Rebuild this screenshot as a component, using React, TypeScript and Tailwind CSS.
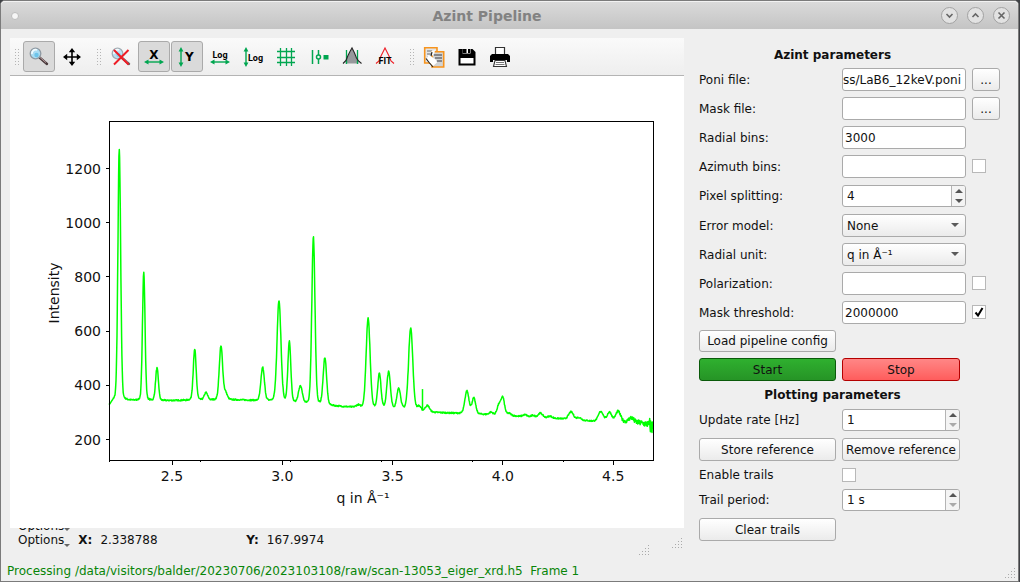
import React, { useMemo, useState } from 'react';

interface Peak {
    q: number;
    height: number;
    width: number;
}

const PEAKS: Peak[] = [
    { q: 2.261, height: 927, width: 0.0074 },
    { q: 2.372, height: 475, width: 0.0068 },
    { q: 2.432, height: 120, width: 0.0075 },
    { q: 2.603, height: 187, width: 0.0078 },
    { q: 2.654, height: 27, width: 0.009 },
    { q: 2.722, height: 198, width: 0.009 },
    { q: 2.743, height: 25, width: 0.009 },
    { q: 2.911, height: 123, width: 0.0092 },
    { q: 2.985, height: 372, width: 0.0105 },
    { q: 3.032, height: 222, width: 0.0078 },
    { q: 3.082, height: 62, width: 0.01 },
    { q: 3.141, height: 618, width: 0.0085 },
    { q: 3.193, height: 174, width: 0.009 },
    { q: 3.343, height: 8, width: 0.01 },
    { q: 3.389, height: 332, width: 0.0105 },
    { q: 3.44, height: 128, width: 0.0085 },
    { q: 3.482, height: 134, width: 0.0095 },
    { q: 3.528, height: 76, width: 0.0095 },
    { q: 3.582, height: 302, width: 0.0112 },
    { q: 3.62, height: 14, width: 0.009 },
    { q: 3.658, height: 22, width: 0.011 },
    { q: 3.837, height: 84, width: 0.0108 },
    { q: 3.868, height: 58, width: 0.0098 },
    { q: 3.946, height: 9, width: 0.01 },
    { q: 3.981, height: 34, width: 0.0092 },
    { q: 3.999, height: 66, width: 0.0098 },
    { q: 4.029, height: 8, width: 0.01 },
    { q: 4.1, height: 8, width: 0.012 },
    { q: 4.136, height: 7, width: 0.01 },
    { q: 4.17, height: 17, width: 0.012 },
    { q: 4.213, height: 7, width: 0.012 },
    { q: 4.309, height: 28, width: 0.013 },
    { q: 4.345, height: 9, width: 0.012 },
    { q: 4.444, height: 36, width: 0.013 },
    { q: 4.483, height: 34, width: 0.012 },
    { q: 4.522, height: 38, width: 0.013 },
    { q: 4.581, height: 16, width: 0.012 },
];

const BASELINE: [number, number][] = [
    [2.215, 326], [2.235, 343], [2.45, 343], [2.6, 345], [2.8, 346], [2.95, 341],
    [3.1, 332], [3.24, 323], [3.33, 318], [3.5, 314], [3.62, 307], [3.68, 300],
    [3.81, 296], [3.9, 293], [4.05, 287], [4.1, 283], [4.26, 277], [4.4, 268],
    [4.52, 266], [4.6, 264], [4.66, 256], [4.68, 244],
];

const xOf = (q: number) => 162 + (q - 2.5) * 220.6;
const yOf = (intensity: number) => 363.5 - (intensity - 200) * 0.271;

const baselineAt = (q: number): number => {
    for (let i = 1; i < BASELINE.length; i++) {
        const [q1, v1] = BASELINE[i];
        if (q <= q1) {
            const [q0, v0] = BASELINE[i - 1];
            return v0 + ((v1 - v0) * (q - q0)) / (q1 - q0);
        }
    }
    return BASELINE[BASELINE.length - 1][1];
};

// Pseudo-Voigt profile, mostly gaussian
const profile = (d: number, w: number): number => {
    const r = (d / w) * (d / w);
    return 0.86 * Math.exp(-Math.LN2 * r) + 0.14 / (1 + r);
};

const buildCurve = (): string => {
    let seed = 7;
    const noise = () => {
        seed = (seed * 16807) % 2147483647;
        return seed / 2147483647 - 0.5;
    };
    const points: string[] = [];
    for (let q = 2.216; q <= 4.68; q += 0.0015) {
        let amp = 5;
        if (q > 4.5) amp += (q - 4.5) * 130;
        if (q > 4.665) amp += 30;
        const sum = PEAKS.reduce((acc, p) => acc + p.height * profile(q - p.q, p.width), 0);
        const value = baselineAt(q) + sum + noise() * amp;
        points.push(`${xOf(q).toFixed(1)},${yOf(value).toFixed(1)}`);
    }
    return points.join(' ');
};

const X_TICKS = [2.5, 3, 3.5, 4, 4.5];
const Y_TICKS = [200, 400, 600, 800, 1000, 1200];
const MINOR_TICKS = [99, 190, 280, 371, 462, 553];

const Chart: React.FC = () => {
    const curve = useMemo(buildCurve, []);

    return (
        <svg viewBox="0 0 674 452" className="block h-auto w-full bg-white text-[14px]" role="img" aria-label="Intensity plot">
            <polyline points={curve} fill="none" stroke="#00ff00" strokeWidth="1.5" strokeLinejoin="round" />
            <path d={`M412.5 ${yOf(386)}V${yOf(306)}`} stroke="#00ff00" strokeWidth="1.5" />
            <rect x="99.5" y="45.5" width="544" height="339" fill="none" stroke="#000" />
            {MINOR_TICKS.map((x) => (
                <path key={x} d={`M${x}.5 385v1`} stroke="#000" />
            ))}
            {X_TICKS.map((q) => (
                <g key={q}>
                    <path d={`M${Math.floor(xOf(q)) + 0.5} 385v4`} stroke="#000" />
                    <text x={xOf(q)} y="405" textAnchor="middle" fill="#111">{q.toFixed(1)}</text>
                </g>
            ))}
            {Y_TICKS.map((v) => (
                <g key={v}>
                    <path d={`M96 ${Math.floor(yOf(v)) + 0.5}h3`} stroke="#000" />
                    <text x="91" y={yOf(v) + 5} textAnchor="end" fill="#111">{v}</text>
                </g>
            ))}
            <text x="353" y="427" textAnchor="middle" fill="#111">q in Å⁻¹</text>
            <text transform="translate(49 217) rotate(-90)" textAnchor="middle" fill="#111">Intensity</text>
        </svg>
    );
};

const GREEN = '#00a650';

const Icon: React.FC<{ children: React.ReactNode }> = ({ children }) => (
    <svg width="22" height="22" viewBox="0 0 22 22" fill="none" className="shrink-0 overflow-visible" aria-hidden="true">{children}</svg>
);

const HArrow: React.FC<{ y: number }> = ({ y }) => (
    <g transform={`translate(0 ${y})`}>
        <path d="M4 0h14" stroke={GREEN} strokeWidth="1.4" />
        <path d="M1 0l4.5-2.4v4.8zM21 0l-4.5-2.4v4.8z" fill={GREEN} />
    </g>
);

const VArrow: React.FC<{ x: number }> = ({ x }) => (
    <g transform={`translate(${x} 0)`}>
        <path d="M0 4v14" stroke={GREEN} strokeWidth="1.4" />
        <path d="M0 1l-2.4 4.5h4.8zM0 21l-2.4-4.5h4.8z" fill={GREEN} />
    </g>
);

const Lens: React.FC = () => (
    <>
        <path d="M11.5 11.5l7.5 6.5" stroke="#4a3a3c" strokeWidth="2.4" strokeLinecap="round" />
        <path d="M11.5 11l6.5 5.6" stroke="#b79a9c" strokeWidth="1" />
        <circle cx="7.5" cy="7.5" r="5.3" fill="#a9dcf3" stroke="#8f9aa3" strokeWidth="1.3" />
        <path d="M4 8a3.6 3.6 0 0 1 5-4" stroke="#f4fcff" strokeWidth="1.8" />
        <circle cx="8.5" cy="9" r="2.2" fill="#6cc4ea" />
    </>
);

const ZoomIcon = () => <Icon><Lens /></Icon>;

const PanIcon = () => (
    <Icon>
        <path d="M11 4v14M4 11h14" stroke="#000" strokeWidth="1.6" />
        <path d="M11 2l3.2 4.2H7.8zM11 20l3.2-4.2H7.8zM2 11l4.2-3.2v6.4zM20 11l-4.2-3.2v6.4z" fill="#000" />
    </Icon>
);

const ResetZoomIcon = () => (
    <Icon>
        <g opacity="0.8"><Lens /></g>
        <path d="M4 4l14.5 14.5M18.5 4L4 18.5" stroke="#ee1c25" strokeWidth="2" />
    </Icon>
);

const XAutoIcon = () => (
    <Icon>
        <text x="11" y="13" textAnchor="middle" fill="#000" className="text-[12px] font-bold">X</text>
        <HArrow y={16} />
    </Icon>
);

const YAutoIcon = () => (
    <Icon>
        <VArrow x={5} />
        <text x="9" y="15" fill="#000" className="text-[12px] font-bold">Y</text>
    </Icon>
);

const LOG_TEXT = 'font-[Roboto,sans-serif] text-[9px] font-bold';

const XLogIcon = () => (
    <Icon>
        <text x="11" y="12" textAnchor="middle" fill="#000" className={LOG_TEXT}>Log</text>
        <HArrow y={16} />
    </Icon>
);

const YLogIcon = () => (
    <Icon>
        <VArrow x={4} />
        <text x="6" y="15" fill="#000" className={LOG_TEXT}>Log</text>
    </Icon>
);

const GridIcon = () => (
    <Icon>
        <path d="M5.5 2v18M11.5 2v18M16.5 2v18M2 5.5h18M2 11.5h18M2 16.5h18" stroke={GREEN} strokeWidth="1.3" />
    </Icon>
);

const CurveStyleIcon = () => (
    <Icon>
        <path d="M4.5 4v14M10.5 4v5M10.5 13v5" stroke={GREEN} strokeWidth="1.5" />
        <circle cx="10.5" cy="11" r="2" stroke={GREEN} strokeWidth="1.5" />
        <path d="M15.5 9h5v4.5h-5z" fill={GREEN} />
    </Icon>
);

const RoiIcon = () => (
    <Icon>
        <path d="M4.5 17.5V15l2.500-5 2-4 2-3.500 2.500 5 2 5 2 3v2z" fill="#97999c" />
        <path d="M5.5 4v14M16.5 4v14" stroke={GREEN} strokeWidth="1.3" />
        <path d="M2 17.5l3-3 2-5 2-4 2-3.500 2.500 5 2 5 2 3 3 2.500" stroke="#222" strokeWidth="1.1" />
    </Icon>
);

const FitIcon = () => (
    <Icon>
        <path d="M2 17.5l3-2.500 2-5 2.500-5 1.500-3 1.500 3 2.500 5 2 5 3 2.500" stroke="#ee1c25" strokeWidth="1.1" />
        <text x="11" y="18" textAnchor="middle" fill="#000" className="font-[Roboto,sans-serif] text-[9px] font-bold">FIT</text>
    </Icon>
);

const CopyIcon = () => (
    <Icon>
        <path d="M1.7 1.7h12.300v15.300H1.700z" fill="#e3e4e6" stroke="#f7941d" strokeWidth="1.6" />
        <path d="M4 5h5M4 8h4M4 11h3" stroke="#6d6e71" strokeWidth="1.2" />
        <path d="M9 5.7h11.700v15.300H9z" fill="#d1d3d4" stroke="#f7941d" strokeWidth="1.6" />
        <path d="M11 9h8M12 12h7M14 15h5" stroke="#6d6e71" strokeWidth="1.3" />
        <path d="M8 5.5l4-1.500-.5 3L9 10z" fill="#fff" />
        <path d="M4 12l1-3 4 2 4 3 1 2.500-4 3.500-4-4z" fill="#fff" />
        <path d="M3 12.5l3.500 4.500 3.500 4M9 6l-1 4" stroke="#222" strokeWidth="1.1" />
    </Icon>
);

const SaveIcon = () => (
    <Icon>
        <path d="M2.5 3h14l3 3v13.500h-17z" fill="#000" />
        <path d="M6.5 3h8v4.500h-8z" fill="#fff" />
        <path d="M6.5 3h4v4h-4zM12 3h2v4h-2z" fill="#000" />
        <path d="M4.5 12h13v5.500h-13z" fill="#fff" />
    </Icon>
);

const PrintIcon = () => (
    <Icon>
        <path d="M6.5 1.5h9v7h-9z" fill="#fff" stroke="#333" strokeWidth="1.2" />
        <path d="M3 8h16l2 2v6h-3v-2H4v2H1v-6z" fill="#000" />
        <path d="M6 14.5h10l1.500 6h-13z" fill="#fff" stroke="#333" strokeWidth="1.1" />
        <path d="M7 16.5h8M6.5 18.5h9" stroke="#777" strokeWidth="1" />
    </Icon>
);

const ToolButton: React.FC<{ label: string; checked?: boolean; children: React.ReactNode }> = ({ label, checked, children }) => (
    <button
        type="button"
        aria-label={label}
        className={`flex h-[31px] w-8 items-center justify-center rounded-[3px] border ${checked ? 'border-[#aaaaaa] bg-[#dadada]' : 'border-transparent'}`}
    >
        {children}
    </button>
);

const ToolGroup: React.FC<{ children: React.ReactNode }> = ({ children }) => (
    <div className="flex items-center gap-px">
        <svg width="12" height="18" viewBox="0 0 12 18" fill="#b5b5b5" aria-hidden="true">
            {[1, 4, 7, 10, 13, 16].map((y) => (
                <React.Fragment key={y}>
                    <rect x="5" y={y} width="1" height="1" />
                    <rect x="8" y={y} width="1" height="1" />
                </React.Fragment>
            ))}
        </svg>
        {children}
    </div>
);

const SizeGrip: React.FC = () => (
    <svg width="11" height="11" viewBox="0 0 11 11" fill="#aaa" aria-hidden="true">
        {[0, 3, 6, 9].map((x, i) =>
            [0, 3, 6, 9].slice(3 - i).map((y) => <rect key={`${x}-${y}`} x={x} y={y} width="1" height="1" />)
        )}
    </svg>
);

const OptionsButton: React.FC = () => (
    <button type="button" className="flex items-end">
        Options
        <svg width="6" height="3" viewBox="0 0 6 3" className="mb-px" aria-hidden="true"><path d="M0 0h6L3 3z" fill="#666" /></svg>
    </button>
);

const FIELD = 'h-[23px] w-full rounded-[3px] border border-[#aaaaaa] bg-white outline-none';
const PUSH = 'h-full w-full rounded-[3px] border border-[#aaaaaa] bg-linear-to-b from-white to-[#ebebeb] text-center whitespace-nowrap';

const Row: React.FC<{ children: React.ReactNode; height?: string }> = ({ children, height = 'h-[23px]' }) => (
    <div className={`grid grid-cols-[137px_124px_28px] items-center gap-x-1.5 ${height}`}>{children}</div>
);

const Check: React.FC<{ label: string; id?: string; initial?: boolean }> = ({ label, id, initial = false }) => {
    const [checked, setChecked] = useState(initial);
    return (
        <span className="relative mb-px block h-3.5 w-3.5">
            <input
                id={id}
                type="checkbox"
                aria-label={label}
                checked={checked}
                onChange={(e) => setChecked(e.target.checked)}
                className="block h-3.5 w-3.5 appearance-none border border-[#b8b8b8] bg-white"
            />
            {checked && (
                <svg viewBox="0 0 14 14" className="pointer-events-none absolute inset-0" fill="none" aria-hidden="true">
                    <path d="M3.5 7.5l2.500 3 4.500-7.500" stroke="#000" strokeWidth="2" />
                </svg>
            )}
        </span>
    );
};

const Spin: React.FC<{ id: string; value: string; atMinimum?: boolean }> = ({ id, value, atMinimum }) => (
    <div className="flex h-[22px] w-full overflow-hidden rounded-[3px] border border-[#aaaaaa] bg-white">
        <input id={id} defaultValue={value} className="min-w-0 flex-1 px-1 outline-none" />
        <div className="flex w-3.5 flex-col border-l border-[#b4b4b4] bg-[#f4f4f4]">
            <button type="button" aria-label="Increase" className="flex flex-1 items-center justify-center">
                <svg width="8" height="4" viewBox="0 0 8 4" aria-hidden="true"><path d="M0 4l4-4 4 4z" fill="#555" /></svg>
            </button>
            <button type="button" aria-label="Decrease" disabled={atMinimum} className="flex flex-1 items-center justify-center">
                <svg width="8" height="4" viewBox="0 0 8 4" aria-hidden="true"><path d="M0 0l4 4 4-4z" fill={atMinimum ? '#aaa' : '#555'} /></svg>
            </button>
        </div>
    </div>
);

const Select: React.FC<{ id: string; options: string[] }> = ({ id, options }) => (
    <div className="relative">
        <select id={id} className="block h-[23px] w-full appearance-none rounded-[3px] border border-[#aaaaaa] bg-linear-to-b from-white to-[#ebebeb] px-1 outline-none">
            {options.map((o) => <option key={o}>{o}</option>)}
        </select>
        <svg width="8" height="4" viewBox="0 0 8 4" className="pointer-events-none absolute top-[9px] right-[7px]" aria-hidden="true">
            <path d="M0 0h8L4 4z" fill="#5a5a5a" />
        </svg>
    </div>
);

const AzintParameters: React.FC = () => (
    <>
        <h2 className="h-[15px] w-[267px] text-center font-bold">Azint parameters</h2>
        <Row>
            <label htmlFor="poni">Poni file:</label>
            <input id="poni" defaultValue="ss/LaB6_12keV.poni" className={`${FIELD} pr-1 text-right`} />
            <button type="button" aria-label="Browse poni file" className={PUSH}>...</button>
        </Row>
        <Row>
            <label htmlFor="mask">Mask file:</label>
            <input id="mask" className={`${FIELD} px-0.5`} />
            <button type="button" aria-label="Browse mask file" className={PUSH}>...</button>
        </Row>
        <Row>
            <label htmlFor="radial">Radial bins:</label>
            <input id="radial" defaultValue="3000" className={`${FIELD} px-0.5`} />
        </Row>
        <Row>
            <label htmlFor="azimuth">Azimuth bins:</label>
            <input id="azimuth" className={`${FIELD} px-0.5`} />
            <Check label="Use azimuth bins" />
        </Row>
        <Row height="h-6">
            <label htmlFor="splitting">Pixel splitting:</label>
            <Spin id="splitting" value="4" />
        </Row>
        <Row>
            <label htmlFor="error">Error model:</label>
            <Select id="error" options={['None']} />
        </Row>
        <Row>
            <label htmlFor="unit">Radial unit:</label>
            <Select id="unit" options={['q in Å⁻¹']} />
        </Row>
        <Row>
            <label htmlFor="polarization">Polarization:</label>
            <input id="polarization" className={`${FIELD} px-0.5`} />
            <Check label="Use polarization" />
        </Row>
        <Row>
            <label htmlFor="threshold">Mask threshold:</label>
            <input id="threshold" defaultValue="2000000" className={`${FIELD} px-0.5`} />
            <Check label="Use mask threshold" initial />
        </Row>
        <Row height="h-[22px]">
            <button type="button" className={PUSH}>Load pipeline config</button>
        </Row>
        <Row>
            <button type="button" className="h-full rounded-[3px] border border-[#0a5a0a] bg-linear-to-b from-[#2fb02f] to-[#269426]">Start</button>
            <button type="button" className="mr-1.5 h-full rounded-[3px] border border-[#b40000] bg-linear-to-b from-[#ff8686] to-[#ff5c5c]">Stop</button>
        </Row>
    </>
);

const PlottingParameters: React.FC = () => (
    <>
        <h2 className="h-[15px] w-[267px] text-center font-bold">Plotting parameters</h2>
        <Row height="h-6">
            <label htmlFor="rate">Update rate [Hz]</label>
            <div className="mr-1.5"><Spin id="rate" value="1" atMinimum /></div>
        </Row>
        <Row>
            <button type="button" className={PUSH}>Store reference</button>
            <div className="mr-1.5 h-full"><button type="button" className={PUSH}>Remove reference</button></div>
        </Row>
        <Row height="h-[15px]">
            <label htmlFor="trails">Enable trails</label>
            <Check id="trails" label="Enable trails" />
        </Row>
        <Row height="h-6">
            <label htmlFor="period">Trail period:</label>
            <div className="mr-1.5"><Spin id="period" value="1 s" atMinimum /></div>
        </Row>
        <Row>
            <button type="button" className={PUSH}>Clear trails</button>
        </Row>
    </>
);

const WindowButton: React.FC<{ label: string; d: string }> = ({ label, d }) => (
    <button type="button" aria-label={label} className="flex h-[17px] w-[17px] items-center justify-center rounded-full border border-[#a2a2a2] bg-[#e2e2e2]">
        <svg width="9" height="9" viewBox="0 0 9 9" fill="none" aria-hidden="true"><path d={d} stroke="#666" strokeWidth="1.6" /></svg>
    </button>
);

const App: React.FC = () => (
    <div className="min-h-screen bg-[#3f4145] pr-px font-['DejaVu_Sans',sans-serif] text-[12px] leading-4 text-[#111]">
        <div className="flex min-h-screen flex-col rounded-t-[5px] border border-[#7b7b7b] bg-[#efefef]">
            <header className="flex h-7 items-center rounded-t-[4px] border-t border-[#f2f2f2] bg-linear-to-b from-[#dadada] to-[#c4c4c4] pr-2 pl-2.5">
                <span className="h-2 w-2 rounded-full border border-[#bcbcbc] bg-[#f6f6f6]" />
                <h1 className="flex-1 pl-3.5 text-center text-[14px] font-bold text-[#828282]">Azint Pipeline</h1>
                <div className="flex gap-[9px]">
                    <WindowButton label="Minimize" d="M1.5 3l3 3 3-3" />
                    <WindowButton label="Maximize" d="M1.5 6l3-3 3 3" />
                    <WindowButton label="Close" d="M1.5 1.5l6 6M7.5 1.5l-6 6" />
                </div>
            </header>

            <main className="flex flex-1 gap-[15px] pt-[9px] pr-[18px] pl-[9px]">
                <section className="min-w-0 flex-1">
                    <div className="flex h-[38px] items-center gap-1 border-b border-[#b4b4b4] bg-linear-to-b from-[#fafafa] to-[#eeeeee]">
                        <ToolGroup>
                            <ToolButton label="Zoom" checked><ZoomIcon /></ToolButton>
                            <ToolButton label="Pan"><PanIcon /></ToolButton>
                        </ToolGroup>
                        <ToolGroup>
                            <ToolButton label="Reset zoom"><ResetZoomIcon /></ToolButton>
                            <ToolButton label="Autoscale X" checked><XAutoIcon /></ToolButton>
                            <ToolButton label="Autoscale Y" checked><YAutoIcon /></ToolButton>
                            <ToolButton label="Logarithmic X"><XLogIcon /></ToolButton>
                            <ToolButton label="Logarithmic Y"><YLogIcon /></ToolButton>
                            <ToolButton label="Grid"><GridIcon /></ToolButton>
                            <ToolButton label="Curve style"><CurveStyleIcon /></ToolButton>
                            <ToolButton label="Region of interest"><RoiIcon /></ToolButton>
                            <ToolButton label="Fit"><FitIcon /></ToolButton>
                        </ToolGroup>
                        <ToolGroup>
                            <ToolButton label="Copy"><CopyIcon /></ToolButton>
                            <ToolButton label="Save"><SaveIcon /></ToolButton>
                            <ToolButton label="Print"><PrintIcon /></ToolButton>
                        </ToolGroup>
                    </div>
                    <Chart />
                    {/* The first options row is mostly hidden under the plot */}
                    <div className="flex h-1 items-end overflow-hidden pl-2 leading-3">
                        <OptionsButton />
                    </div>
                    <div className="flex items-start pl-2">
                        <OptionsButton />
                        <div className="flex w-[168px] gap-2 pl-2"><b>X:</b><span>2.338788</span></div>
                        <div className="flex gap-2 pl-2"><b>Y:</b><span>167.9974</span></div>
                        <div className="ml-auto flex items-start gap-[22px] pt-1.5 pr-px">
                            <div className="pt-[7px]"><SizeGrip /></div>
                            <SizeGrip />
                        </div>
                    </div>
                </section>

                <aside className="flex w-[301px] flex-col gap-1.5 pt-[9px]">
                    <AzintParameters />
                    <PlottingParameters />
                </aside>
            </main>

            <footer className="flex items-end justify-between pr-0.5 pb-0.5 pl-1.5">
                <p className="whitespace-pre text-[#088508]">Processing /data/visitors/balder/20230706/2023103108/raw/scan-13053_eiger_xrd.h5  Frame 1</p>
                <SizeGrip />
            </footer>
        </div>
    </div>
);

export default App;
